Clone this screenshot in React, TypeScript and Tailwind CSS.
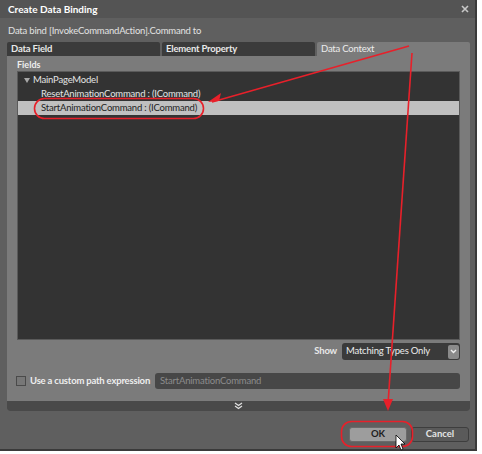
import React from 'react';

const font = { fontFamily: 'Lato, "Noto Sans", sans-serif' };

function TreeRow({ label, depth, selected, arrow }: { label: string; depth: number; selected?: boolean; arrow?: boolean }) {
  return (
    <div className={`h-[14px] flex items-center ${selected ? 'bg-[#c0c0c0] text-[#1e1e1e]' : 'text-[#e4e4e4]'}`}>
      <div className={depth === 0 ? 'w-[15px] flex justify-end pr-[3px]' : 'w-[23px]'}>
        {arrow && (
          <svg width="6" height="5" viewBox="0 0 6 5">
            <path d="M0 0 L6 0 L3 5 Z" fill="#a8a8a8" />
          </svg>
        )}
      </div>
      <span className="text-[9.5px] tracking-[-0.2px] leading-none">{label}</span>
    </div>
  );
}

export default function App() {
  return (
    <div className="relative w-[482px] h-[454px] bg-white overflow-hidden" style={font}>
      <div className="w-[477px] h-[451px] bg-[#5f5f5f] border-r-2 border-b-2 border-[#3a3a3a] flex flex-col">
        {/* Title bar */}
        <div className="h-[18px] bg-[#545454] flex items-center justify-between pl-[8px] pr-[6px]">
          <span className="text-[10px] font-bold text-white leading-none">Create Data Binding</span>
          <svg width="8" height="8" viewBox="0 0 8 8">
            <path d="M1 1 L7 7 M7 1 L1 7" stroke="#c8c8c8" strokeWidth="1.6" />
          </svg>
        </div>

        <div className="px-[7px] pr-[5px] flex flex-col">
          <div className="h-[24px] flex items-center pl-[1px] pt-[3px] text-[9.5px] tracking-[-0.2px] text-[#e2e2e2]">
            Data bind [InvokeCommandAction].Command to
          </div>

          {/* Tabs */}
          <div className="grid grid-cols-3 gap-[2px] h-[14px] text-[9.5px] tracking-[-0.2px]">
            <div className="bg-[#3b3b3b] rounded-t-[2px] flex items-center pl-[4px] font-bold text-[#e8e8e8]">Data Field</div>
            <div className="bg-[#3b3b3b] rounded-t-[2px] flex items-center pl-[4px] font-bold text-[#e8e8e8]">Element Property</div>
            <div className="bg-[#7b7b7b] rounded-t-[2px] flex items-center pl-[4px] text-[#ececec]">Data Context</div>
          </div>

          {/* Panel */}
          <div className="bg-[#7b7b7b] h-[355px] flex flex-col rounded-b-[3px]">
            <div className="px-[10px] flex flex-col flex-1">
              <div className="h-[15px] flex items-center text-[9px] font-bold text-[#eeeeee] pt-[2px]">Fields</div>
              <div className="bg-[#333333] h-[269px] border border-[#5a5a5a] pt-[1px]">
                <TreeRow label="MainPageModel" depth={0} arrow />
                <TreeRow label="ResetAnimationCommand : (ICommand)" depth={1} />
                <TreeRow label="StartAnimationCommand : (ICommand)" depth={1} selected />
              </div>

              <div className="flex items-center justify-end mt-[3px] h-[17px] gap-[5px] text-[9.5px] tracking-[-0.2px]">
                <span className="font-bold text-[#e8e8e8]">Show</span>
                <div className="w-[118px] h-[17px] bg-[#3a3a3a] rounded-[3px] flex items-center justify-between pl-[4px] pr-[1px]">
                  <span className="text-[#ececec] whitespace-nowrap">Matching Types Only</span>
                  <div className="w-[11px] h-[14px] bg-[#8a8a8a] rounded-[2px] flex items-center justify-center">
                    <svg width="7" height="5" viewBox="0 0 7 5">
                      <path d="M1 1 L3.5 3.5 L6 1" stroke="#f0f0f0" strokeWidth="1.4" fill="none" />
                    </svg>
                  </div>
                </div>
              </div>

              <div className="flex items-center mt-[13px] h-[16px] -ml-[1px] text-[9.5px] tracking-[-0.2px]">
                <div className="w-[10px] h-[10px] bg-[#777777] border border-[#4a4a4a]" />
                <span className="ml-[4px] font-bold text-[#eeeeee] whitespace-nowrap">Use a custom path expression</span>
                <div className="ml-[5px] flex-1 h-[16px] bg-[#474747] rounded-[3px] flex items-center pl-[5px]">
                  <span className="text-[#8c8c8c]">StartAnimationCommand</span>
                </div>
              </div>
            </div>

            <div className="h-[10px] bg-[#494949] rounded-b-[3px] flex items-center justify-center mt-auto">
              <svg width="9" height="8" viewBox="0 0 9 8">
                <path d="M1 1 L4.5 3.5 L8 1 M1 4 L4.5 6.5 L8 4" stroke="#e0e0e0" strokeWidth="1.3" fill="none" />
              </svg>
            </div>
          </div>

          {/* Buttons */}
          <div className="flex justify-end gap-[4px] mt-[16px] pr-[1px] text-[9.5px] font-bold">
            <div className="w-[58px] h-[15px] bg-[#9d9d9d] border border-[#6a6a6a] rounded-[3px] flex items-center justify-center text-[#1e1e1e]">OK</div>
            <div className="w-[58px] h-[15px] bg-[#5a5a5a] border border-[#3e3e3e] rounded-[3px] flex items-center justify-center text-[#e4e4e4]">Cancel</div>
          </div>
        </div>
      </div>

      {/* Annotation overlay */}
      <svg className="absolute inset-0 pointer-events-none" width="482" height="454" viewBox="0 0 482 454">
        <g stroke="#e8202a" strokeWidth="1.6" fill="none">
          <line x1="409" y1="46" x2="212" y2="102" />
          <line x1="412" y1="53" x2="388" y2="404" />
          <rect x="34.5" y="98.5" width="169" height="20" rx="10" />
          <rect x="341.5" y="421.5" width="71" height="25" rx="10" />
        </g>
        <path d="M208 102 L221 93 L219 101 Z" fill="#e8202a" />
        <path d="M388 411 L383 399 L393 399 Z" fill="#e8202a" />
        <path d="M396 435 L396 448 L399 445 L401 450 L403 449 L401 444 L405 444 Z" fill="#ffffff" stroke="#000000" strokeWidth="0.8" />
      </svg>
    </div>
  );
}
